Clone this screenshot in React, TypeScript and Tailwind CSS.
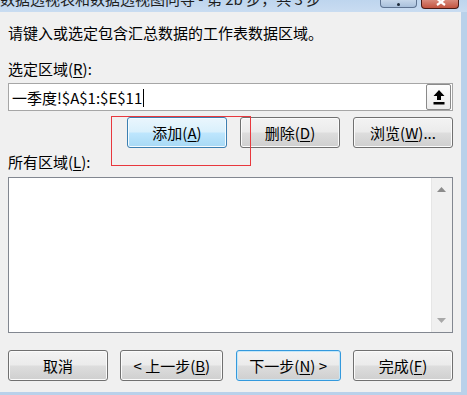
const font = "font-['Microsoft_YaHei','Noto_Sans_CJK_SC',sans-serif]";

const btnBase =
  "flex h-[31px] w-[100px] items-center justify-center rounded-[3px] border text-[15px] text-black";
const btnNormal =
  "border-[#707070] bg-[linear-gradient(#f3f3f3_0%,#ebebeb_48%,#dddddd_52%,#cfcfcf_100%)] shadow-[inset_0_0_0_1px_#fbfbfb]";
const btnHover =
  "border-[#3c7fb1] bg-[linear-gradient(#eaf6fd_0%,#d9f0fc_48%,#bee6fd_52%,#a7d9f5_100%)] shadow-[inset_0_0_0_1px_#f4fbff]";
const btnDefault =
  "border-[#3399dd] bg-[linear-gradient(#f3f3f3_0%,#ebebeb_48%,#dddddd_52%,#cfcfcf_100%)] shadow-[inset_0_0_0_1px_#c4e6f8]";

function Btn({ label, k, tail = "", before = "", variant = "normal", w = "w-[100px]" }: {
  label: string;
  k: string;
  tail?: string;
  before?: string;
  variant?: "normal" | "hover" | "default";
  w?: string;
}) {
  const v = variant === "hover" ? btnHover : variant === "default" ? btnDefault : btnNormal;
  return (
    <button type="button" className={`${btnBase} ${v} ${w}`}>
      {before}
      {label}(<span className="underline underline-offset-2">{k}</span>){tail}
    </button>
  );
}

function CollapseIcon() {
  return (
    <svg viewBox="0 0 14 16" className="h-[16px] w-[14px]" aria-hidden="true">
      <path d="M7 1 L12.5 7 L9 7 L9 11 L5 11 L5 7 L1.5 7 Z" fill="#000" />
      <rect x="1.5" y="13" width="11" height="2.5" fill="#000" />
    </svg>
  );
}

export default function App() {
  return (
    <div className={`flex h-[395px] w-[467px] flex-col overflow-hidden bg-[#b9d1ea] ${font}`}>
      {/* title bar, cut at the top of the shot */}
      <div className="relative h-[12px] shrink-0 bg-[linear-gradient(#bed5ee,#c9dcf1)]">
        <div className="absolute left-[0px] top-[-11px] whitespace-nowrap text-[15px] leading-[20px] text-[#1e1e1e]">
          数据透视表和数据透视图向导 - 第 2b 步，共 3 步
        </div>
        <div className="absolute left-[380px] top-0 h-[8px] w-[37px] rounded-b-[4px] border border-t-0 border-[#5e7391] bg-[linear-gradient(#c6d7ea,#a9c0db)]">
          <div className="mx-auto mt-[3px] h-[3px] w-[3px] rounded-full bg-[#1d2a3a]" />
        </div>
        <div className="absolute left-[421px] top-0 h-[9px] w-[38px] overflow-hidden rounded-b-[4px] border border-t-0 border-[#4a1a14] bg-[linear-gradient(#d98a7b,#c2533f)]">
          <svg viewBox="0 0 38 9" className="h-[9px] w-[38px]" aria-hidden="true">
            <path d="M13 -3 L19 2 L25 -3 M15 5 L19 2 L23 5" stroke="#fff" strokeWidth="2.2" fill="none" />
          </svg>
        </div>
      </div>

      <div className="flex shrink-0">
        <div className="relative h-[380px] w-[461px] bg-[#f0f0f0] px-[8px] text-[15px] leading-[20px] text-black">
          <p className="mt-[11px]">请键入或选定包含汇总数据的工作表数据区域。</p>

          <p className="mt-[16px]">
            选定区域(<span className="underline underline-offset-2">R</span>):
          </p>

          <div className="mt-[4px] flex h-[28px] items-center border border-[#a6a6a6] bg-white pl-[3px] pr-[1px]">
            <span className="flex-1 leading-[20px]">
              一季度!$A$1:$E$11<span className="ml-[1px] inline-block h-[18px] w-[1px] translate-y-[3px] bg-black" />
            </span>
            <div className="flex h-[26px] w-[25px] items-center justify-center rounded-[2px] border border-[#8a8a8a] bg-[linear-gradient(#fdfdfd,#ececec)]">
              <CollapseIcon />
            </div>
          </div>

          <div className="mt-[6px] flex justify-end gap-[13px]">
            <Btn label="添加" k="A" variant="hover" />
            <Btn label="删除" k="D" />
            <Btn label="浏览" k="W" tail="..." />
          </div>

          <p className="mt-[4px]">
            所有区域(<span className="underline underline-offset-2">L</span>):
          </p>

          <div className="mt-[5px] flex h-[156px] border border-[#828790] bg-white">
            <div className="flex-1" />
            <div className="flex w-[21px] flex-col items-center justify-between bg-[#f0f0f0] py-[9px] shadow-[inset_1px_0_0_#e6e6e6]">
              <svg viewBox="0 0 9 5" className="h-[5px] w-[9px]" aria-hidden="true">
                <path d="M0 5 L4.5 0 L9 5 Z" fill="#8c8c8c" />
              </svg>
              <svg viewBox="0 0 9 5" className="h-[5px] w-[9px]" aria-hidden="true">
                <path d="M0 0 L4.5 5 L9 0 Z" fill="#a8a8a8" />
              </svg>
            </div>
          </div>

          <div className="mt-[17px] flex justify-between">
            <button type="button" className={`${btnBase} ${btnNormal} w-[100px]`}>
              取消
            </button>
            <Btn label="上一步" k="B" before="< " w="w-[103px]" />
            <Btn label="下一步" k="N" tail=" >" variant="default" w="w-[105px]" />
            <Btn label="完成" k="F" />
          </div>

          {/* red annotation box */}
          <div className="pointer-events-none absolute left-[111px] top-[104px] h-[50px] w-[140px] border border-[#e8383d]" />
        </div>
      </div>
    </div>
  );
}
